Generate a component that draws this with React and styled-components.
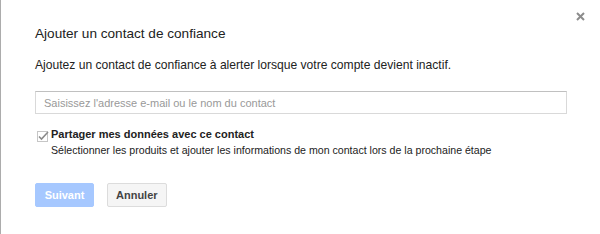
import React from "react";
import styled, { createGlobalStyle } from "styled-components";

const GlobalStyle = createGlobalStyle`
  html, body {
    margin: 0;
    padding: 0;
    background: #fff;
  }
  body {
    font-family: Arial, "Liberation Sans", sans-serif;
  }
`;

const Dialog = styled.div`
  position: relative;
  box-sizing: border-box;
  width: 600px;
  height: 234px;
  background: #fff;
  border-left: 1px solid #acacac;
  padding: 24px 33px 0 34px;
  color: #222;
`;

const Close = styled.button`
  position: absolute;
  top: 12px;
  right: 15px;
  width: 9px;
  height: 9px;
  padding: 0;
  border: 0;
  background: none;
  cursor: pointer;
  display: flex;
  align-items: center;
  justify-content: center;
`;

const Title = styled.h2`
  margin: 0;
  font-size: 13.6px;
  font-weight: normal;
  line-height: 20px;
  color: #222;
`;

const Desc = styled.p`
  margin: 13px 0 0;
  font-size: 12.1px;
  line-height: 16px;
  color: #222;
`;

const Input = styled.input`
  display: block;
  box-sizing: border-box;
  width: 532px;
  height: 23px;
  margin-top: 18px;
  padding: 0 8px;
  border: 1px solid #d9d9d9;
  border-top-color: #c0c0c0;
  font-family: inherit;
  font-size: 11px;
  color: #222;
  outline: none;
  &::placeholder {
    color: #999;
  }
`;

const CheckRow = styled.label`
  display: flex;
  align-items: flex-start;
  gap: 3px;
  margin-top: 12px;
  padding-left: 2px;
`;

const Box = styled.span`
  flex: none;
  width: 11px;
  height: 11px;
  margin-top: 2px;
`;

const LabelText = styled.div`
  display: flex;
  flex-direction: column;
`;

const Strong = styled.span`
  font-size: 11px;
  font-weight: bold;
  line-height: 16px;
  color: #222;
`;

const Hint = styled.span`
  font-size: 10.6px;
  line-height: 16px;
  color: #222;
`;

const Actions = styled.div`
  display: flex;
  gap: 13px;
  margin-top: 25px;
`;

const Button = styled.button`
  box-sizing: border-box;
  min-width: 59px;
  height: 24px;
  padding: 0 8px;
  border-radius: 2px;
  font-family: inherit;
  font-size: 11px;
  font-weight: bold;
  cursor: ${({ disabled }) => (disabled ? "default" : "pointer")};
  border: 1px solid ${({ $primary }) => ($primary ? "#a6c8ff" : "#dcdcdc")};
  background: ${({ $primary }) => ($primary ? "#a6c8ff" : "#f5f5f5")};
  color: ${({ $primary }) => ($primary ? "#fff" : "#444")};
`;

export default function App() {
  return (
    <>
      <GlobalStyle />
      <Dialog>
        <Close aria-label="Fermer">
          <svg width="9" height="9" viewBox="0 0 9 9">
            <path d="M1 1L8 8M8 1L1 8" stroke="#8c8c8c" strokeWidth="2" />
          </svg>
        </Close>
        <Title>Ajouter un contact de confiance</Title>
        <Desc>
          Ajoutez un contact de confiance à alerter lorsque votre compte devient
          inactif.
        </Desc>
        <Input placeholder="Saisissez l'adresse e-mail ou le nom du contact" />
        <CheckRow>
          <Box>
            <svg width="12" height="11" viewBox="0 0 12 11">
              <rect x="0.5" y="0.5" width="10" height="10" fill="#fff" stroke="#c6c6c6" />
              <path d="M2 5.5L4.5 8L11 1" fill="none" stroke="#8a8a8a" strokeWidth="1.6" />
            </svg>
          </Box>
          <LabelText>
            <Strong>Partager mes données avec ce contact</Strong>
            <Hint>
              Sélectionner les produits et ajouter les informations de mon
              contact lors de la prochaine étape
            </Hint>
          </LabelText>
        </CheckRow>
        <Actions>
          <Button $primary disabled>
            Suivant
          </Button>
          <Button>Annuler</Button>
        </Actions>
      </Dialog>
    </>
  );
}
